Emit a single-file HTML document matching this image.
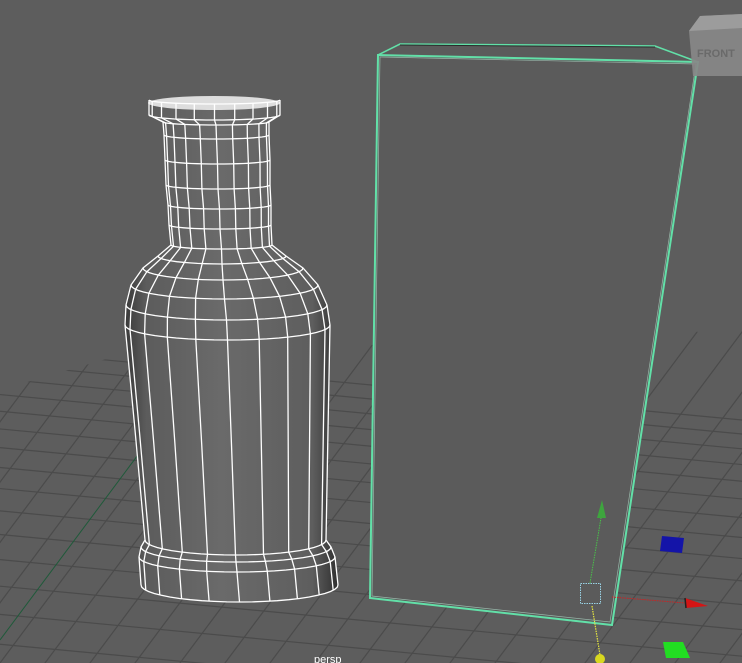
<!DOCTYPE html>
<html><head><meta charset="utf-8"><style>
html,body{margin:0;padding:0;background:#5d5d5d;overflow:hidden;width:742px;height:663px}
svg{display:block}
</style></head><body>
<svg id="s" width="742" height="663" viewBox="0 0 742 663" xmlns="http://www.w3.org/2000/svg">
<defs>
<linearGradient id="bg" x1="0" x2="1" y1="0" y2="0">
<stop offset="0" stop-color="#3a3a3a"/><stop offset="0.1" stop-color="#5c5c5c"/><stop offset="0.45" stop-color="#6a6a6a"/><stop offset="0.88" stop-color="#5e5e5e"/><stop offset="1" stop-color="#303030"/>
</linearGradient>
<clipPath id="gc"><polygon points="0,390 120,355 742,330 742,663 0,663"/></clipPath>
</defs>
<rect width="742" height="663" fill="#5d5d5d"/>
<g id="grid" clip-path="url(#gc)" stroke="#4b4b4b" stroke-width="1.2" fill="none"></g>
<line x1="0" y1="640" x2="205" y2="365" stroke="#1f5a3a" stroke-width="1"/>
<g id="bottle"></g>
<polygon points="378,55 400,44 655,46 698,62 612,625 370,598" fill="#5b5b5b"/>
<polyline points="378,55 400,44 655,46 698,62" fill="none" stroke="#62e0a8" stroke-width="1.6"/>
<line x1="400" y1="45" x2="655" y2="47" stroke="#2a2a2a" stroke-width="1"/>
<polygon points="378,55 698,62 612,625 370,598" fill="none" stroke="#62e0a8" stroke-width="2"/>
<polygon points="380,57 696,64 610,622 372,596" fill="none" stroke="#bff5dd" stroke-width="0.7" opacity="0.6"/>
<line x1="590" y1="583" x2="602" y2="512" stroke="#49c24a" stroke-width="1" stroke-dasharray="1.5,1"/>
<polygon points="602,500 597,518 606,518" fill="#3ea53e"/>
<rect x="580.5" y="583.5" width="20" height="20" fill="none" stroke="#9ad3e6" stroke-width="1" stroke-dasharray="1.5,1"/>
<line x1="612" y1="597" x2="685" y2="603" stroke="#c22" stroke-width="1" stroke-dasharray="1.5,1"/>
<polygon points="685,598 708,606 686,608" fill="#d41515"/>
<line x1="685" y1="598" x2="686" y2="608" stroke="#222" stroke-width="1.5"/>
<polygon points="662,536 684,538 682,553 660,551" fill="#1414a8"/>
<polygon points="663,642 683,642 690,658 666,658" fill="#22dd22"/>
<line x1="592" y1="606" x2="600" y2="655" stroke="#e8e840" stroke-width="1.2" stroke-dasharray="1.5,1"/>
<circle cx="600" cy="659" r="5" fill="#d8d820"/>
<polygon points="689,31 700,16 742,14 742,76 693,76" fill="#888" opacity="0.92"/>
<polygon points="700,16 742,14 742,28 689,31" fill="#9c9c9c"/>
<text x="697" y="57" font-family="Liberation Sans, sans-serif" font-size="11" font-weight="bold" fill="#6a6a6a">FRONT</text>
<text x="314" y="663" font-family="Liberation Sans, sans-serif" font-size="11" fill="#fff">persp</text>
</svg>
<script>
var NS="http://www.w3.org/2000/svg";
function el(p,n,a){var e=document.createElementNS(NS,n);for(var k in a)e.setAttribute(k,a[k]);p.appendChild(e);return e;}
var g=document.getElementById('grid');
for(var i=-12;i<30;i++){var x0=i*45;el(g,'line',{x1:x0-150,y1:663+150*1.34,x2:x0+400,y2:663-400*1.34});}
var y=350,sp=14;
for(var j=0;j<25;j++){el(g,'line',{x1:0,y1:y,x2:742,y2:y+70});y+=sp;sp*=1.06;}
var rings=[[100,149,280,4],[115,149,280,5],[122,163,269,3],[135,164,269,4],[160,165,270,4],[185,166,270,4],[205,168,271,4],[225,169,271,4],[245,171,272,4],[256,158,286,8],[268,143,303,12],[285,131,318,14],[305,126,327,15],[325,125,330,15],[430,135,328,15],[540,145,326,15],[547,141,331,15],[557,139,335,15],[585,141,338,17]];
var N=10;
function pt(r,t){return [r[1]+(r[2]-r[1])*(1-Math.cos(Math.PI*t))/2, r[0]+r[3]*Math.sin(Math.PI*t)];}
var b=document.getElementById('bottle');
var L=[],R=[];rings.forEach(function(r){L.push(r[1]+','+r[0]);R.unshift(r[2]+','+r[0]);});
var last=rings[rings.length-1];var bot=[];for(var k=0;k<=20;k++){var p=pt(last,k/20);bot.push(p[0]+','+p[1]);}
el(b,'polygon',{points:L.concat(bot).concat(R).join(' '),fill:'url(#bg)'});
el(b,'ellipse',{cx:214,cy:103,rx:66,ry:7,fill:'#ddd'});
var wg=el(b,'g',{stroke:'#fff','stroke-width':1.3,fill:'none'});
rings.forEach(function(r,idx){if(idx==14)return;var s=[];for(var k=0;k<=24;k++){var p=pt(r,k/24);s.push(p[0].toFixed(1)+','+p[1].toFixed(1));}el(wg,'polyline',{points:s.join(' ')});});
for(var k=0;k<=N;k++){var s=[];rings.forEach(function(r){var p=pt(r,k/N);s.push(p[0].toFixed(1)+','+p[1].toFixed(1));});el(wg,'polyline',{points:s.join(' ')});}
</script>
</body></html>
